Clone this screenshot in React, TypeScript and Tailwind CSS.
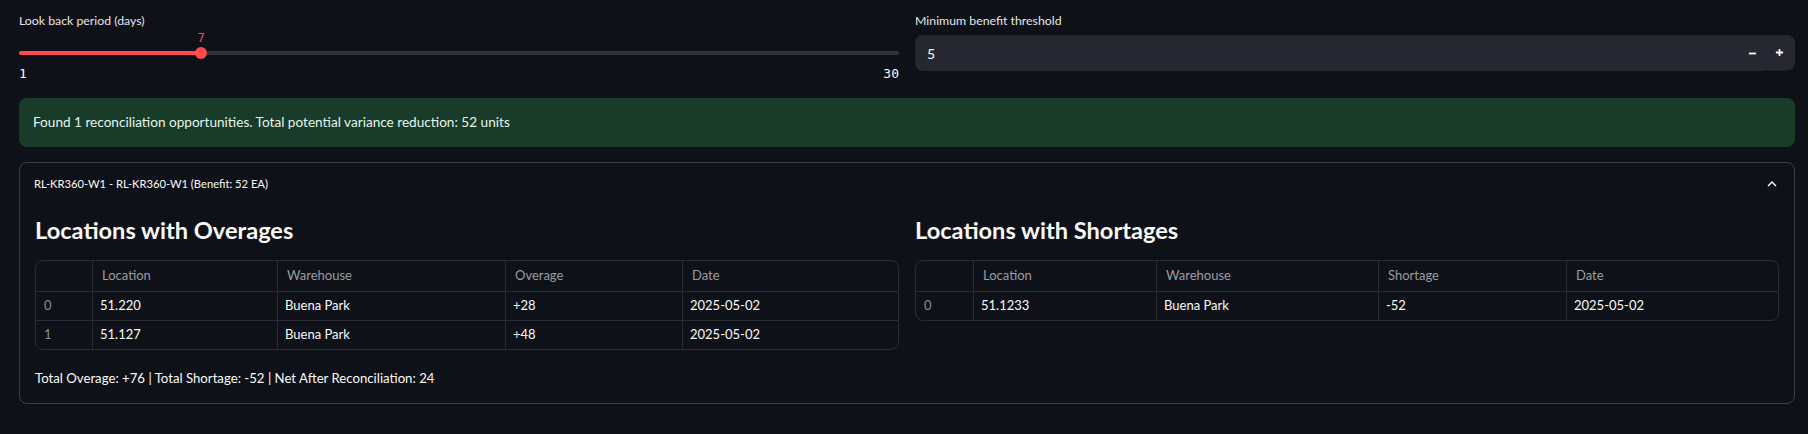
import React from 'react';

const overages = [
  { idx: 0, location: '51.220', warehouse: 'Buena Park', qty: '+28', date: '2025-05-02' },
  { idx: 1, location: '51.127', warehouse: 'Buena Park', qty: '+48', date: '2025-05-02' },
];

const shortages = [
  { idx: 0, location: '51.1233', warehouse: 'Buena Park', qty: '-52', date: '2025-05-02' },
];

type Row = { idx: number; location: string; warehouse: string; qty: string; date: string };

function DataTable({ rows, qtyLabel, cols }: { rows: Row[]; qtyLabel: string; cols: string }) {
  return (
    <div className="border border-[#2a2c35] rounded-lg overflow-hidden text-[13px]">
      <div className={`grid ${cols} h-[30px] text-[#9a9ca4]`}>
        <div className="border-r border-[#2a2c35]" />
        <div className="flex items-center px-[9px] border-r border-[#2a2c35]">Location</div>
        <div className="flex items-center px-[9px] border-r border-[#2a2c35]">Warehouse</div>
        <div className="flex items-center px-[9px] border-r border-[#2a2c35]">{qtyLabel}</div>
        <div className="flex items-center px-[9px]">Date</div>
      </div>
      {rows.map((r) => (
        <div key={r.idx} className={`grid ${cols} h-[29px] border-t border-[#2a2c35]`}>
          <div className="flex items-center px-[8px] border-r border-[#2a2c35] text-[#8a8c94]">{r.idx}</div>
          <div className="flex items-center px-[7px] border-r border-[#2a2c35]">{r.location}</div>
          <div className="flex items-center px-[7px] border-r border-[#2a2c35]">{r.warehouse}</div>
          <div className="flex items-center px-[7px] border-r border-[#2a2c35]">{r.qty}</div>
          <div className="flex items-center px-[7px]">{r.date}</div>
        </div>
      ))}
    </div>
  );
}

function LookbackSlider() {
  const min = 1;
  const max = 30;
  const value = 7;
  const pct = ((value - min) / (max - min)) * 100;

  return (
    <div>
      <div className="relative h-[16px]">
        <span
          className="absolute top-0 -translate-x-1/2 text-[12px] leading-[15px] text-[#ff4b4b] font-['DejaVu_Sans_Mono',monospace]"
          style={{ left: `${pct}%` }}
        >
          {value}
        </span>
      </div>
      <div className="relative h-[12px] flex items-center">
        <div className="h-[4px] w-full rounded-full bg-[#30323b]" />
        <div className="absolute left-0 h-[4px] rounded-full bg-[#ff4b4b]" style={{ width: `${pct}%` }} />
        <div
          className="absolute w-[12px] h-[12px] -translate-x-1/2 rounded-full bg-[#ff4b4b]"
          style={{ left: `${pct}%` }}
        />
      </div>
      <div className="mt-[5px] flex justify-between text-[13px] leading-5 font-['DejaVu_Sans_Mono',monospace] text-[#fafafa]">
        <span>{min}</span>
        <span>{max}</span>
      </div>
    </div>
  );
}

function NumberInput() {
  return (
    <div className="mt-[4px] h-[36px] rounded-lg bg-[#262730] flex items-center">
      <div className="flex-1 pl-[12px] text-[14px]">5</div>
      <button className="w-[22px] h-full flex items-center justify-center">
        <svg width="9" height="9" viewBox="0 0 10 10">
          <path d="M1 5h8" stroke="#fafafa" strokeWidth="2" />
        </svg>
      </button>
      <button className="w-8 h-full flex items-center justify-center border-b border-[#1b1c23] rounded-br-lg">
        <svg width="9" height="9" viewBox="0 0 10 10">
          <path d="M1 5h8M5 1v8" stroke="#fafafa" strokeWidth="2" />
        </svg>
      </button>
    </div>
  );
}

export default function App() {
  return (
    <div className="min-h-screen bg-[#0e1117] text-[#fafafa] font-['Lato',sans-serif]">
      <div className="ml-[19px] w-[1776px] pt-[11px]">
        <div className="grid grid-cols-2 gap-4">
          <div>
            <div className="text-[12.3px] leading-5 text-[#e6e6e8]">Look back period (days)</div>
            <LookbackSlider />
          </div>
          <div>
            <div className="text-[12.3px] leading-5 text-[#e6e6e8]">Minimum benefit threshold</div>
            <NumberInput />
          </div>
        </div>

        <div className="mt-[14px] h-[49px] rounded-lg bg-[#193b2a] flex items-center px-[14px] text-[13.6px] text-[#e3f6e9]">
          Found 1 reconciliation opportunities. Total potential variance reduction: 52 units
        </div>

        <div className="mt-[15px] rounded-lg border border-[#3a3c44]">
          <div className="h-[42px] flex items-center justify-between pl-[14px] pr-[13px]">
            <span className="text-[11.2px]">RL-KR360-W1 - RL-KR360-W1 (Benefit: 52 EA)</span>
            <svg width="18" height="18" viewBox="0 0 24 24" fill="#fafafa">
              <path d="M7.41 15.41 12 10.83l4.59 4.58L18 14l-6-6-6 6z" />
            </svg>
          </div>
          <div className="px-[15px] pb-[15px]">
            <div className="grid grid-cols-2 gap-4 mt-[10px]">
              <div>
                <h3 className="text-[23.6px] leading-[30px] font-bold mb-[15px]">Locations with Overages</h3>
                <DataTable rows={overages} qtyLabel="Overage" cols="grid-cols-[57px_185px_228px_177px_1fr]" />
              </div>
              <div>
                <h3 className="text-[23.6px] leading-[30px] font-bold mb-[15px]">Locations with Shortages</h3>
                <DataTable rows={shortages} qtyLabel="Shortage" cols="grid-cols-[58px_183px_222px_188px_1fr]" />
              </div>
            </div>
            <div className="mt-[18px] text-[13.2px] leading-5">
              Total Overage: +76 | Total Shortage: -52 | Net After Reconciliation: 24
            </div>
          </div>
        </div>
      </div>
    </div>
  );
}
